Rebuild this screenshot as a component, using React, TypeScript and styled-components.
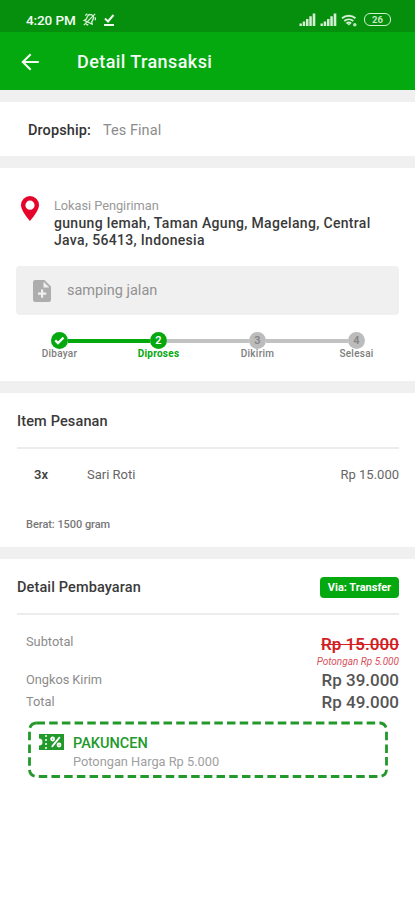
import React from "react";
import styled, { createGlobalStyle } from "styled-components";

const GREEN = "#04a80f";

const GlobalStyle = createGlobalStyle`
  * { box-sizing: border-box; }
  body { margin: 0; background: #fff; font-family: Roboto, "Noto Sans", sans-serif; }
`;

const Screen = styled.main`
  width: 415px;
  height: 900px;
  overflow: hidden;
  display: flex;
  flex-direction: column;
  gap: 12px;
  background: #f0f0f0;
`;

const Header = styled.header`
  height: 90px;
  flex: none;
  background: ${GREEN};
  color: #f4fbf4;
`;

const StatusBar = styled.div`
  height: 32px;
  padding: 7px 24px 0 26px;
  display: flex;
  align-items: center;
  background: #068f0d;
`;

const StatusIcons = styled.div<{ $right?: boolean }>`
  display: flex;
  align-items: center;
  gap: ${(p) => (p.$right ? 4 : 6)}px;
  margin-left: ${(p) => (p.$right ? "auto" : "6px")};
`;

const TitleBar = styled.div`
  height: 58px;
  padding: 1px 20px 0;
  display: flex;
  align-items: center;
  gap: 36px;
`;

const Section = styled.section<{ $height?: number; $pad?: string }>`
  background: #fff;
  flex: ${(p) => (p.$height ? "none" : "1")};
  height: ${(p) => (p.$height ? `${p.$height}px` : "auto")};
  padding: ${(p) => p.$pad ?? "0 16px 0 17px"};
  display: flex;
  flex-direction: column;
`;

const Text = styled.span<{
  $size: number;
  $weight?: number;
  $color?: string;
  $track?: number;
  $line?: number;
  $italic?: boolean;
  $strike?: boolean;
}>`
  font-size: ${(p) => p.$size}px;
  font-weight: ${(p) => p.$weight ?? 400};
  color: ${(p) => p.$color ?? "inherit"};
  letter-spacing: ${(p) => p.$track ?? 0}px;
  line-height: ${(p) => p.$line ?? 18}px;
  font-style: ${(p) => (p.$italic ? "italic" : "normal")};
  text-decoration: ${(p) => (p.$strike ? "line-through" : "none")};
  text-decoration-thickness: 1px;
  white-space: nowrap;
`;

const DropshipRow = styled.div`
  display: flex;
  align-items: center;
  gap: 12px;
  height: 54px;
  padding-top: 4px;
`;

const LocationRow = styled.div`
  display: flex;
  gap: 15px;
  height: 98px;
  padding: 28px 0 0 5px;
`;

const Address = styled.div`
  display: flex;
  flex-direction: column;
`;

const Note = styled.div`
  height: 49px;
  display: flex;
  align-items: center;
  gap: 16px;
  padding: 1px 0 0 17px;
  border-radius: 4px;
  background: #f0f0f0;
`;

const Stepper = styled.div`
  display: grid;
  grid-template-columns: repeat(4, 99px);
  margin: 17px 0 0 -6px;
`;

const Step = styled.div`
  display: flex;
  flex-direction: column;
  align-items: center;
`;

const Track = styled.div`
  align-self: stretch;
  display: flex;
  align-items: center;
`;

const Line = styled.div<{ $tone: "done" | "todo" | "none" }>`
  flex: 1;
  height: 4px;
  background: ${(p) => ({ done: GREEN, todo: "#c2c2c2", none: "transparent" })[p.$tone]};
`;

const Dot = styled.div<{ $active: boolean }>`
  width: 17px;
  height: 17px;
  border-radius: 50%;
  display: grid;
  place-items: center;
  background: ${(p) => (p.$active ? GREEN : "#bcbcbc")};
  color: ${(p) => (p.$active ? "#fff" : "#858585")};
`;

const SectionHead = styled.div`
  height: 56px;
  flex: none;
  display: flex;
  align-items: center;
  justify-content: space-between;
  padding-top: 3px;
  border-bottom: 2px solid #ececec;
`;

const ItemRow = styled.div`
  display: grid;
  grid-template-columns: 53px 1fr auto;
  padding: 17px 0 0 17px;
`;

const Weight = styled.div`
  padding: 29px 0 0 9px;
`;

const Badge = styled.div`
  width: 79px;
  height: 21px;
  display: grid;
  place-items: center;
  border-radius: 4px;
  background: ${GREEN};
`;

const Payments = styled.div`
  padding: 17px 0 0 9px;
`;

const PayRow = styled.div<{ $height: number }>`
  display: flex;
  justify-content: space-between;
  height: ${(p) => p.$height}px;
`;

const Amount = styled.div`
  display: flex;
  flex-direction: column;
  align-items: flex-end;
`;

const Voucher = styled.div`
  position: relative;
  width: 360px;
  height: 57px;
  margin: 6px 0 0 11px;
  padding: 13px 0 0 11px;
  display: flex;
  gap: 9px;
`;

const VoucherOutline = styled.svg`
  position: absolute;
  inset: 0;
`;

const VoucherText = styled.div`
  display: flex;
  flex-direction: column;
`;

const Mute = () => (
  <svg width="15" height="15" viewBox="0 0 24 24" fill="none" stroke="#d0efd0" strokeWidth="2.200">
    <g transform="rotate(25 12 12)">
      <path d="M5 17h14l-2-3V9a5 5 0 0 0-10 0v5zM10 21h4M3 9l2-4M21 9l-2-4" />
    </g>
    <path d="M3 21 21 3" />
  </svg>
);

const Downloaded = () => (
  <svg width="12" height="14" viewBox="0 0 12 14" fill="none" stroke="#f0faf0" strokeWidth="2">
    <path d="m2 5.500 3 3 5.500-6.500M1 12h10" />
  </svg>
);

const Signal = () => (
  <svg width="17" height="13" viewBox="0 0 17 13" fill="#d5efd5">
    <path d="M.5 10.500h2.400V13H.5zM3.700 8.500h2.500V13H3.700zM7 6h2.500v7H7zM10.300 3.300h2.500V13h-2.500zM13.700.5h2.600V13h-2.600z" />
  </svg>
);

const Wifi = () => (
  <svg width="17" height="14" viewBox="0 0 17 14" fill="none" stroke="#d5efd5" strokeWidth="1.900">
    <path d="M1 5.200a10.500 10.500 0 0 1 13.500 0M3.300 8a7 7 0 0 1 9 0M5.500 10.400a3.600 3.600 0 0 1 4.600 0" />
    <path d="m6.300 10.800 1.600 1.800 1.600-1.800z" fill="#d5efd5" stroke="none" />
    <circle cx="13.800" cy="11.800" r="1.800" fill="#b8e4b8" stroke="none" />
  </svg>
);

const BatteryShell = styled.div`
  width: 27px;
  height: 13px;
  margin-left: 2px;
  border: 1.5px solid #d0efd0;
  border-radius: 6px;
  display: grid;
  place-items: center;
`;

const BackArrow = () => (
  <svg width="21" height="18" viewBox="0 0 21 18" fill="none" stroke="#f4fbf4" strokeWidth="2.100">
    <path d="M18.800 9H3M10.700 1.200 2.800 9l7.900 7.800" />
  </svg>
);

const Pin = () => (
  <svg width="18" height="25" viewBox="0 0 18 25">
    <path
      fill="#e5052b"
      fillRule="evenodd"
      d="M9 0a9 9 0 0 0-9 9c0 6.200 9 16 9 16s9-9.800 9-16a9 9 0 0 0-9-9zm0 4.600a4.600 4.600 0 1 1 0 9.200 4.600 4.600 0 0 1 0-9.200z"
    />
  </svg>
);

const NoteIcon = () => (
  <svg width="18" height="22" viewBox="0 0 18 22">
    <path
      fill="#adadad"
      fillRule="evenodd"
      d="M2.200 0H11.500L18 6.500V19.800A2.200 2.200 0 0 1 15.800 22H2.200A2.200 2.200 0 0 1 0 19.800V2.200A2.200 2.200 0 0 1 2.200 0zM10.500 1.700V7.500H16.300zM8 9.500V12.500H5V14.700H8V17.700H10.200V14.700H13.200V12.500H10.200V9.500z"
    />
  </svg>
);

const Check = () => (
  <svg width="11" height="9" viewBox="0 0 11 9" fill="none" stroke="#fff" strokeWidth="2.200">
    <path d="m1.300 4.400 2.700 2.700 5.500-5.500" />
  </svg>
);

const Coupon = () => (
  <svg width="25" height="16" viewBox="0 0 25 16">
    <path fill="#22992a" d="M0 0h25v16H0v-4.500a3.500 3.500 0 0 0 0-7z" />
    <path stroke="#fff" strokeWidth="1.500" strokeDasharray="2 2" d="M7 1v15" />
    <g fill="none" stroke="#fff" strokeWidth="1.800">
      <path d="m12.800 12.800 8-9.600" />
      <circle cx="13.600" cy="5" r="1.500" />
      <circle cx="20" cy="11" r="1.500" />
    </g>
  </svg>
);

const steps = ["Dibayar", "Diproses", "Dikirim", "Selesai"];
const CURRENT = 1;

const lineTone = (segment: number) =>
  segment < 0 || segment >= steps.length - 1 ? "none" : segment < CURRENT ? "done" : "todo";

export default function App() {
  return (
    <>
      <GlobalStyle />
      <Screen>
        <Header>
          <StatusBar>
            <Text $size={13.5} $weight={500} $track={-0.1}>4:20 PM</Text>
            <StatusIcons>
              <Mute />
              <Downloaded />
            </StatusIcons>
            <StatusIcons $right>
              <Signal />
              <Signal />
              <Wifi />
              <BatteryShell>
                <Text $size={9.5} $weight={700} $color="#c4e8c4" $line={10}>26</Text>
              </BatteryShell>
            </StatusIcons>
          </StatusBar>
          <TitleBar>
            <BackArrow />
            <Text $size={18} $weight={500} $track={0.42} $line={24}>Detail Transaksi</Text>
          </TitleBar>
        </Header>

        <Section $height={54} $pad="0 28px">
          <DropshipRow>
            <Text $size={14.5} $weight={500} $color="#333" $track={0.1}>Dropship:</Text>
            <Text $size={14.5} $color="#8c8c8c" $track={0.08}>Tes Final</Text>
          </DropshipRow>
        </Section>

        <Section $height={213} $pad="0 16px">
          <LocationRow>
            <Pin />
            <Address>
              <Text $size={12.8} $color="#999" $line={19} $track={-0.04}>Lokasi Pengiriman</Text>
              <Text $size={14} $weight={500} $color="#3a3a3a" $line={17} $track={0.32}>
                gunung lemah, Taman Agung, Magelang, Central
                <br />
                Java, 56413, Indonesia
              </Text>
            </Address>
          </LocationRow>
          <Note>
            <NoteIcon />
            <Text $size={14.5} $color="#929292" $line={20}>samping jalan</Text>
          </Note>
          <Stepper>
            {steps.map((label, i) => (
              <Step key={label}>
                <Track>
                  <Line $tone={lineTone(i - 1)} />
                  <Dot $active={i <= CURRENT}>
                    {i < CURRENT ? <Check /> : <Text $size={11} $weight={600} $line={13}>{i + 1}</Text>}
                  </Dot>
                  <Line $tone={lineTone(i)} />
                </Track>
                <Text
                  $size={10}
                  $weight={i === CURRENT ? 700 : 500}
                  $color={i === CURRENT ? GREEN : "#7d7d7d"}
                  $line={10}
                  $track={0.25}
                >
                  {label}
                </Text>
              </Step>
            ))}
          </Stepper>
        </Section>

        <Section $height={154}>
          <SectionHead>
            <Text $size={14.5} $weight={500} $color="#3a3a3a" $track={0.14}>Item Pesanan</Text>
          </SectionHead>
          <ItemRow>
            <Text $size={13} $weight={600} $color="#444">3x</Text>
            <Text $size={13} $color="#666">Sari Roti</Text>
            <Text $size={13} $color="#666">Rp 15.000</Text>
          </ItemRow>
          <Weight>
            <Text $size={11} $weight={500} $color="#777" $track={-0.05}>Berat: 1500 gram</Text>
          </Weight>
        </Section>

        <Section>
          <SectionHead>
            <Text $size={14.5} $weight={500} $color="#3a3a3a" $track={0.12}>Detail Pembayaran</Text>
            <Badge>
              <Text $size={11} $weight={700} $color="#fff">Via: Transfer</Text>
            </Badge>
          </SectionHead>
          <Payments>
            <PayRow $height={39}>
              <Text $size={12.8} $color="#8c8c8c" $line={19}>Subtotal</Text>
              <Amount>
                <Text $size={17} $weight={600} $color="#d21f25" $line={24} $strike>Rp 15.000</Text>
                <Text $size={10} $color="#d8505c" $line={11} $italic>Potongan Rp 5.000</Text>
              </Amount>
            </PayRow>
            <PayRow $height={22}>
              <Text $size={12.8} $color="#8c8c8c" $track={-0.04}>Ongkos Kirim</Text>
              <Text $size={17} $weight={500} $color="#555">Rp 39.000</Text>
            </PayRow>
            <PayRow $height={22}>
              <Text $size={12.8} $color="#8c8c8c">Total</Text>
              <Text $size={17} $weight={500} $color="#555">Rp 49.000</Text>
            </PayRow>
          </Payments>
          <Voucher>
            <VoucherOutline width="360" height="57" viewBox="0 0 360 57" fill="none">
              <rect x="1.500" y="2" width="357" height="53.500" rx="7" stroke="#22992a" strokeWidth="2.800" strokeDasharray="8.500 4.200" />
            </VoucherOutline>
            <Coupon />
            <VoucherText>
              <Text $size={14.5} $weight={500} $color="#22992a" $line={19}>PAKUNCEN</Text>
              <Text $size={12.8} $color="#a0a0a0">Potongan Harga Rp 5.000</Text>
            </VoucherText>
          </Voucher>
        </Section>
      </Screen>
    </>
  );
}
